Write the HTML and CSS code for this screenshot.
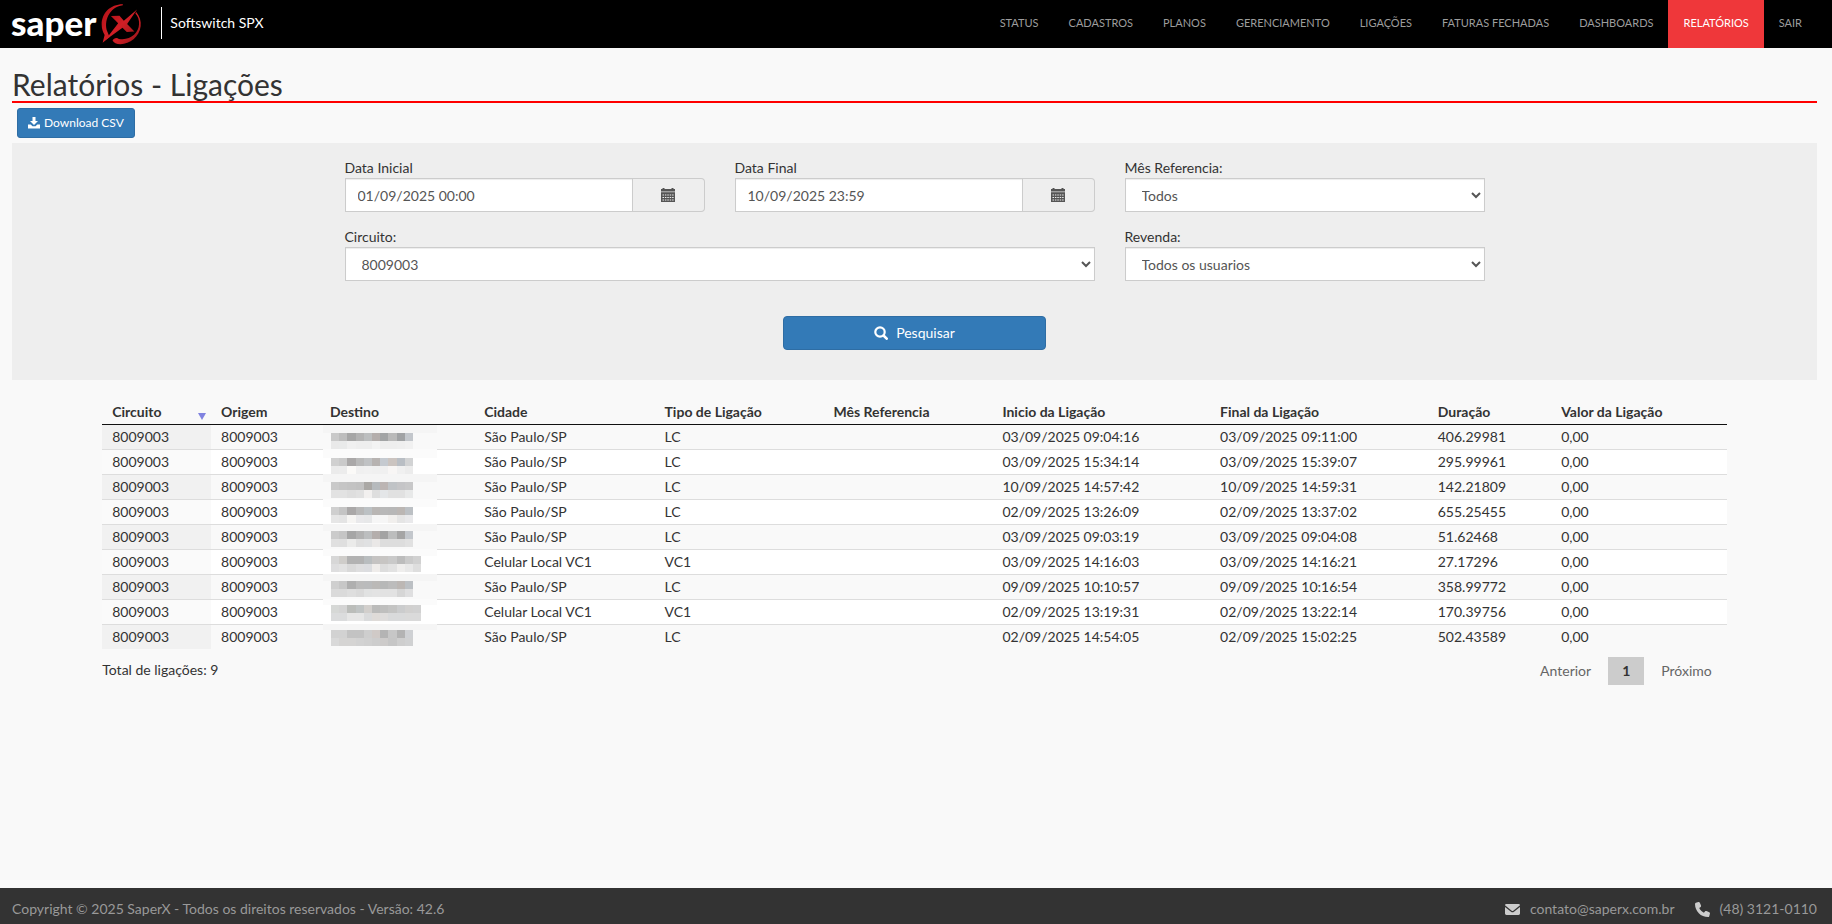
FILE: index.html
```
<!DOCTYPE html>
<html lang="pt-BR">
<head>
<meta charset="utf-8">
<title>Relatórios - Ligações</title>
<link rel="stylesheet" href="styles.css">
</head>
<body>
<header class="topbar">
  <a class="brand" href="#">
    <span class="brand-name">saper</span>
    <svg class="brand-mark" viewBox="300 3 130 129" aria-hidden="true">
      <defs>
        <linearGradient id="mark" x1="0" y1="0" x2="1" y2="1">
          <stop offset="0" stop-color="#a80d12"/>
          <stop offset="0.5" stop-color="#d01f26"/>
          <stop offset="1" stop-color="#8c1216"/>
        </linearGradient>
      </defs>
      <path fill="url(#mark)" d="M369 9C331 9 305 36 305 70C305 84 309 94 314 102L308 126L329 108L322 92C311 62 326 18 369 12Z"/>
      <path fill="url(#mark)" d="M409 32C420 46 425 60 423 76C419 108 390 130 362 130C350 130 341 126 338 119C341 112 350 109 357 114C390 120 417 98 418 70C419 56 415 45 407 37Z"/>
      <path fill="url(#mark)" d="M333 45L359 44L372 59L412 25L382 69L404 92L381 93L368 80L314 120L355 67Z"/>
    </svg>
    <span class="brand-product">Softswitch SPX</span>
  </a>
  <nav class="menu">
    <a href="#">STATUS</a>
    <a href="#">CADASTROS</a>
    <a href="#">PLANOS</a>
    <a href="#">GERENCIAMENTO</a>
    <a href="#">LIGAÇÕES</a>
    <a href="#">FATURAS FECHADAS</a>
    <a href="#">DASHBOARDS</a>
    <a href="#" class="active">RELATÓRIOS</a>
    <a href="#">SAIR</a>
  </nav>
</header>

<main class="content">
  <h1 class="title">Relatórios - Ligações</h1>
  <div class="toolbar">
    <button type="button" class="btn btn-small">
      <svg class="icon-small" viewBox="0 0 12 12" aria-hidden="true"><path fill="currentColor" d="M4.500 0h3v4H10L6 8 2 4h2.500zM0 7.500h2.700L4.500 9.200h3l1.800-1.700H12V11.500H0z"/></svg>
      Download CSV
    </button>
  </div>

  <form class="filters">
    <div class="fields">
      <div class="field">
        <label for="start">Data Inicial</label>
        <div class="date-group">
          <input id="start" class="control" type="text" value="01/09/2025 00:00">
          <button type="button" class="date-button" aria-label="Abrir calendário">
            <svg class="icon" viewBox="0 0 14 14" aria-hidden="true"><path fill="currentColor" d="M0 1h1.500V0h2v1h7V0h2v1H14v2.300H0z"/><path fill="currentColor" opacity=".5" d="M0 3.300h14v1H0z"/><path fill="currentColor" fill-rule="evenodd" d="M0 4.300h14V14H0zM1.500 6.500v1H3v-1zm2.400 0v1h1.500v-1zm2.400 0v1h1.500v-1zm2.400 0v1h1.500v-1zm2.400 0v1h1.500v-1zM1.500 9v1H3V9zm2.400 0v1h1.500V9zm2.400 0v1h1.500V9zm2.400 0v1h1.500V9zm2.400 0v1h1.500V9zM1.500 11.500v1H3v-1zm2.400 0v1h1.500v-1zm2.400 0v1h1.500v-1zm2.400 0v1h1.500v-1zm2.400 0v1h1.500v-1z"/></svg>
          </button>
        </div>
      </div>
      <div class="field">
        <label for="end">Data Final</label>
        <div class="date-group">
          <input id="end" class="control" type="text" value="10/09/2025 23:59">
          <button type="button" class="date-button" aria-label="Abrir calendário">
            <svg class="icon" viewBox="0 0 14 14" aria-hidden="true"><path fill="currentColor" d="M0 1h1.500V0h2v1h7V0h2v1H14v2.300H0z"/><path fill="currentColor" opacity=".5" d="M0 3.300h14v1H0z"/><path fill="currentColor" fill-rule="evenodd" d="M0 4.300h14V14H0zM1.500 6.500v1H3v-1zm2.400 0v1h1.500v-1zm2.400 0v1h1.500v-1zm2.400 0v1h1.500v-1zm2.400 0v1h1.500v-1zM1.500 9v1H3V9zm2.400 0v1h1.500V9zm2.400 0v1h1.500V9zm2.400 0v1h1.500V9zm2.400 0v1h1.500V9zM1.500 11.500v1H3v-1zm2.400 0v1h1.500v-1zm2.400 0v1h1.500v-1zm2.400 0v1h1.500v-1zm2.400 0v1h1.500v-1z"/></svg>
          </button>
        </div>
      </div>
      <div class="field">
        <label for="month">Mês Referencia:</label>
        <select id="month" class="control"><option>Todos</option></select>
      </div>
      <div class="field field-wide">
        <label for="circuit">Circuito:</label>
        <select id="circuit" class="control"><option>8009003</option></select>
      </div>
      <div class="field">
        <label for="reseller">Revenda:</label>
        <select id="reseller" class="control"><option>Todos os usuarios</option></select>
      </div>
    </div>
    <button type="submit" class="btn btn-search">
      <svg class="icon" viewBox="0 0 14 14" aria-hidden="true"><circle cx="6" cy="6" r="4.700" fill="none" stroke="currentColor" stroke-width="2.200"/><path d="M9.500 9.500l3.200 3.200" stroke="currentColor" stroke-width="2.600" stroke-linecap="round"/></svg>
      Pesquisar
    </button>
  </form>

  <section class="results">
    <table class="calls">
      <colgroup>
        <col class="c-circuit"><col class="c-origin"><col class="c-target"><col class="c-city"><col class="c-type"><col class="c-month"><col class="c-start"><col class="c-end"><col class="c-length"><col class="c-value">
      </colgroup>
      <thead>
        <tr>
          <th class="sorted"><div class="sort-head">Circuito<span class="sort-arrow"></span></div></th>
          <th>Origem</th><th>Destino</th><th>Cidade</th><th>Tipo de Ligação</th><th>Mês Referencia</th><th>Inicio da Ligação</th><th>Final da Ligação</th><th>Duração</th><th>Valor da Ligação</th>
        </tr>
      </thead>
      <tbody>
        <tr><td>8009003</td><td>8009003</td><td class="masked"></td><td>São Paulo/SP</td><td>LC</td><td></td><td>03/09/2025 09:04:16</td><td>03/09/2025 09:11:00</td><td>406.29981</td><td>0,00</td></tr>
        <tr><td>8009003</td><td>8009003</td><td class="masked"></td><td>São Paulo/SP</td><td>LC</td><td></td><td>03/09/2025 15:34:14</td><td>03/09/2025 15:39:07</td><td>295.99961</td><td>0,00</td></tr>
        <tr><td>8009003</td><td>8009003</td><td class="masked"></td><td>São Paulo/SP</td><td>LC</td><td></td><td>10/09/2025 14:57:42</td><td>10/09/2025 14:59:31</td><td>142.21809</td><td>0,00</td></tr>
        <tr><td>8009003</td><td>8009003</td><td class="masked"></td><td>São Paulo/SP</td><td>LC</td><td></td><td>02/09/2025 13:26:09</td><td>02/09/2025 13:37:02</td><td>655.25455</td><td>0,00</td></tr>
        <tr><td>8009003</td><td>8009003</td><td class="masked"></td><td>São Paulo/SP</td><td>LC</td><td></td><td>03/09/2025 09:03:19</td><td>03/09/2025 09:04:08</td><td>51.62468</td><td>0,00</td></tr>
        <tr><td>8009003</td><td>8009003</td><td class="masked"></td><td>Celular Local VC1</td><td>VC1</td><td></td><td>03/09/2025 14:16:03</td><td>03/09/2025 14:16:21</td><td>27.17296</td><td>0,00</td></tr>
        <tr><td>8009003</td><td>8009003</td><td class="masked"></td><td>São Paulo/SP</td><td>LC</td><td></td><td>09/09/2025 10:10:57</td><td>09/09/2025 10:16:54</td><td>358.99772</td><td>0,00</td></tr>
        <tr><td>8009003</td><td>8009003</td><td class="masked"></td><td>Celular Local VC1</td><td>VC1</td><td></td><td>02/09/2025 13:19:31</td><td>02/09/2025 13:22:14</td><td>170.39756</td><td>0,00</td></tr>
        <tr><td>8009003</td><td>8009003</td><td class="masked"></td><td>São Paulo/SP</td><td>LC</td><td></td><td>02/09/2025 14:54:05</td><td>02/09/2025 15:02:25</td><td>502.43589</td><td>0,00</td></tr>
      </tbody>
    </table>
    <div class="results-foot">
      <span class="total">Total de ligações: 9</span>
      <nav class="pager" aria-label="Paginação">
        <button type="button">Anterior</button>
        <button type="button" class="current">1</button>
        <button type="button">Próximo</button>
      </nav>
    </div>
  </section>
</main>

<footer class="footer">
  <span>Copyright © 2025 SaperX - Todos os direitos reservados - Versão: 42.6</span>
  <div class="contacts">
    <a href="mailto:contato@saperx.com.br">
      <svg class="contact-icon" viewBox="0 0 15 15" aria-hidden="true"><path fill="currentColor" d="M1.400 2h12.200Q15 2 15 3.300L8.300 8.700q-.8.600-1.600 0L0 3.300Q0 2 1.400 2zM0 4.900l6 4.800q1.500 1.100 3 0l6-4.800v6.700q0 1.400-1.400 1.400H1.400Q0 13 0 11.600z"/></svg>
      contato@saperx.com.br
    </a>
    <a href="tel:+554831210110">
      <svg class="contact-icon" viewBox="0 0 512 512" aria-hidden="true"><path fill="currentColor" d="M164.900 24.600c-7.700-18.600-28-28.500-47.400-23.200l-88 24C12.100 30.200 0 46 0 64c0 247.400 200.600 448 448 448 18 0 33.800-12.100 38.600-29.500l24-88c5.300-19.400-4.600-39.700-23.200-47.400l-96-40c-16.300-6.800-35.200-2.100-46.300 11.600L304.700 368C234.300 334.700 177.300 277.700 144 207.300L193.300 167c13.700-11.200 18.400-30 11.600-46.300z"/></svg>
      (48) 3121-0110
    </a>
  </div>
</footer>
<script src="script.js"></script>
</body>
</html>
```
FILE: styles.css
```
* { box-sizing: border-box; }

body {
  margin: 0;
  min-height: 100vh;
  display: flex;
  flex-direction: column;
  background: #f9f9f9;
  color: #333;
  font-family: Lato, "Open Sans", sans-serif;
  font-size: 14px;
  line-height: 20px;
}

a { color: inherit; text-decoration: none; }
input, select, button { font: inherit; color: inherit; }

.topbar {
  display: flex;
  justify-content: space-between;
  height: 48px;
  padding: 0 15px 0 11px;
  background: #000;
}
.brand { display: flex; align-items: center; color: #fff; }
.brand-name { font-size: 35px; font-weight: 900; line-height: 44px; padding-bottom: 4px; }
.brand-mark { width: 43px; height: 43px; margin: 0 18px 2px 4px; }
.brand-product {
  padding: 6px 0 6px 8px;
  margin-bottom: 2px;
  border-left: 1px solid #fff;
}

.menu { display: flex; }
.menu a {
  padding: 13px 15px 15px;
  font-size: 11px;
  color: #9d9d9d;
}
.menu .active { background: #ef373a; color: #fff; }

.content { flex: 1; padding: 20px 15px 0 12px; }
.title {
  margin: 0;
  border-bottom: 2px solid #f00;
  font-size: 30px;
  font-weight: 400;
  line-height: 33px;
}
.toolbar { padding: 5px; }

.btn {
  display: flex;
  align-items: center;
  justify-content: center;
  border: 1px solid #2e6da4;
  border-radius: 4px;
  background: #337ab7;
  color: #fff;
}
.btn-small { gap: 4px; height: 30px; padding: 0 10px; font-size: 12px; border-radius: 3px; }
.btn-search { gap: 8px; width: 263px; height: 34px; margin: 35px auto 0; }
.icon { width: 14px; height: 14px; }
.icon-small { width: 12px; height: 12px; }

.filters { padding: 15px 15px 30px; background: #eee; }
.fields {
  display: grid;
  grid-template-columns: repeat(3, 1fr);
  gap: 15px 30px;
  max-width: 1140px;
  margin: 0 auto;
}
.field { display: flex; flex-direction: column; }
.field-wide { grid-column: span 2; }
.control {
  width: 100%;
  height: 34px;
  padding: 6px 12px;
  border: 1px solid #ccc;
  border-radius: 0;
  background: #fff;
  color: #555;
  box-shadow: inset 0 1px 1px rgba(0, 0, 0, 0.075);
}
.date-group { display: flex; }
.date-button {
  display: flex;
  align-items: center;
  justify-content: center;
  flex: 0 0 72px;
  border: 1px solid #ccc;
  border-left: 0;
  border-radius: 0 4px 4px 0;
  background: #eee;
  color: #555;
}

.results { width: 90%; margin: 20px auto 0; }
.calls { width: 100%; table-layout: fixed; border-collapse: separate; border-spacing: 0; }
.c-circuit, .c-origin { width: 6.7%; }
.c-target { width: 9.5%; }
.c-city { width: 11.1%; }
.c-type, .c-month { width: 10.4%; }
.c-start, .c-end { width: 13.4%; }
.c-length { width: 7.6%; }
.calls th {
  padding: 2px 10px;
  border-bottom: 1px solid #111;
  text-align: left;
  font-weight: 700;
  white-space: nowrap;
}
.calls .sorted { padding-right: 5px; }
.sort-head { display: flex; justify-content: space-between; }
.sort-arrow {
  align-self: end;
  margin-bottom: 2px;
  border: 4px solid transparent;
  border-top: 7px solid #8083e0;
  border-bottom: 0;
}
.calls td { padding: 2px 10px; white-space: nowrap; }
.calls tbody tr + tr td { border-top: 1px solid #ddd; }
.calls tbody tr:nth-child(odd) { background: #f9f9f9; }
.calls tbody tr:nth-child(even) { background: #fff; }
.calls tbody tr:nth-child(odd) td:first-child { background: #f1f1f1; }
.calls tbody tr:nth-child(even) td:first-child { background: #fafafa; }
.calls .masked { padding: 0 0 0 3px; }
.mosaic { display: block; width: 114px; height: 24px; overflow: visible; }

.results-foot {
  display: flex;
  justify-content: space-between;
  padding-top: 8px;
}
.total { padding-top: 3px; }
.pager { display: flex; gap: 2px; }
.pager button {
  height: 28px;
  padding: 0 15px;
  border: 0;
  background: none;
  color: #666;
}
.pager .current { background: #ccc; color: #333; font-weight: 700; padding: 0 14px; }

.footer {
  display: flex;
  justify-content: space-between;
  padding: 11px 15px 5px 12px;
  background: #333;
  color: #999;
}
.contacts { display: flex; gap: 20px; }
.contacts a { display: flex; align-items: center; gap: 10px; }
.contact-icon { width: 15px; height: 15px; color: #ccc; }
```
FILE: script.js
```
// Masks the destination numbers: offset of the mosaic, then dark and light cell colours.
const masks = [
  [8, "c9c9c9 bdbdbd a6a6a6 b3b3b3 bcbebf b4aeac a2a4a5 b9b9b9 a0a2a4 c3c7cc", "e9e9e9 e9eaea f0f0f0 eeeeee eeeeee f3f3f3 eeeeee eeeeee efefef f1f1f1"],
  [8, "d0d0d0 cacaca aaa8a8 b9b9b9 c0c2c4 b7b3b1 c5cad0 cbc4c0 b9bec4 d2d3d4", "ebebeb ececec fbfaf8 f0f0f0 f1f1f1 f0f0f0 f0f0f0 f8f6f5 f0f0f0 ececec"],
  [7, "c9c9c9 c5c5c5 c3c3c3 c1c1c1 aaa8a5 b6babd bcb5b3 c0c3c6 c5c5c7 c8c8c9", "e2e2e2 e2e2e2 dedede e1e1e1 f2f0ef dedede e4e6e8 e1e1e1 e1e1e1 e8e9e9"],
  [7, "cfcfcf c4c4c4 aaa8a8 b8b8b8 bcc1c4 b9b6b4 b8b8b8 b7b7b7 bbb6b3 bcc0c4", "e6e6e6 e4e4e4 f6f5f3 e9e9eb e7e8e9 f6f6f6 f6f6f6 f1efed e5e5e5 e9e9eb"],
  [6, "cbcbcb c5c5c5 a6a6a6 b2b2b2 bcbebf b4aeac a3a3a3 bcbdbd a5a5a5 c3c7cc", "e0e0e0 dfdfdf ebebea dfdfdf e0e1e2 eae8e7 dddddd dddddd dddddd e1e1e1"],
  [6, "d7d7d7 cfcdca b2b2b2 b2b2b2 b9bdbf c5c3c2 c7c5c3 c9c9c9 bcbcbc cacaca d1d1d1", "dededf e2e2e2 d9d9d9 dededf dcdde0 efecea dddddd e2e2e2 efeeed e8e8e8 dedede"],
  [6, "cfcfcf c7c7c7 afafaf bbbbbb babbbc bbb9b7 b7b8b8 bcbcbc bcb7b4 bcc0c4", "dadada dadada dedede dadada e1e2e2 e3e3e3 e2e2e2 e2e2e2 d6d6d6 dfdfe0"],
  [5, "d6d8d6 d4d4d4 bbbdba c0c4c4 d2cfcc bbbbba bfbfbe c4c4c3 cbcccd d1d0cf d1d1d1", "dbdcdd dbdcdd e6e6e6 e6e6e6 dadbdc dfdbd8 dfdddc d9dadb d9dadb dadada dadada"],
  [5, "d2d2d2 d2d2d2 c3c3c3 c3c3c3 cecece d0cac7 b4b4b4 c7c7c7 b3b3b3 cfd1d4", "d9d9d9 d5d4d3 d5d4d3 d2d2d2 d0d0d0 cdcdcd cdcbca c6c6c6 cecece d0d1d2"]
];

document.querySelectorAll(".masked").forEach((cell, row) => {
  const [top, dark, light] = masks[row];
  const start = row ? -1 : 0;
  const strip = row % 2 ? "#fbfbfb" : "#f5f5f5";
  let rects = `<rect x="0" y="${start}" width="114" height="${top - start}" fill="${strip}"/>`;
  const line = (colours, y) => colours.split(" ").forEach((c, i) => {
    rects += `<rect x="${8 + i * 8.2}" y="${y}" width="8.2" height="8" fill="#${c}"/>`;
  });
  line(dark, top);
  line(light, top + 8);
  cell.innerHTML = `<svg class="mosaic" viewBox="0 0 114 24" shape-rendering="crispEdges" aria-hidden="true">${rects}</svg>`;
});
```
